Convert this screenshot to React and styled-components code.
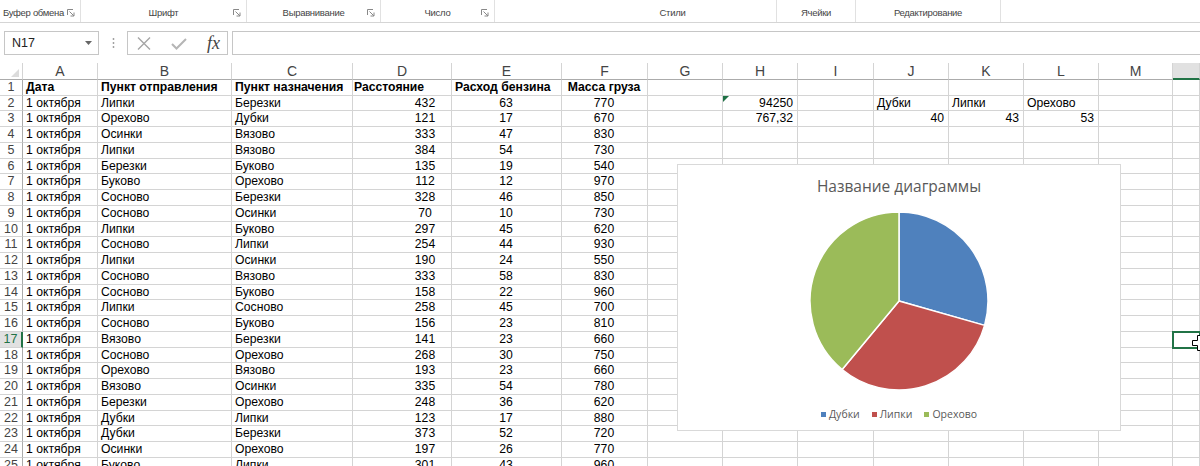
import React from "react";
import styled, { createGlobalStyle } from "styled-components";

const GlobalStyle = createGlobalStyle`
  html, body {
    margin: 0;
    padding: 0;
    background: #fff;
    overflow: hidden;
  }
  body {
    font-family: "Liberation Sans", Arial, sans-serif;
  }
`;

const Page = styled.div`
  position: relative;
  width: 1200px;
  height: 466px;
  overflow: hidden;
  background: #fff;
`;

/* ribbon */
const Ribbon = styled.div`
  display: flex;
  height: 22px;
  border-bottom: 1px solid #d5d5d5;
`;

const Group = styled.div`
  position: relative;
  box-sizing: border-box;
  width: ${(p) => p.$w}px;
  flex: ${(p) => (p.$grow ? 1 : "none")};
  display: flex;
  align-items: flex-end;
  justify-content: ${(p) => (p.$left ? "flex-start" : "center")};
  padding: 0 0 3px ${(p) => p.$shift || 0}px;
  border-right: ${(p) => (p.$grow ? "none" : "1px solid #e1e1e1")};
  font-family: "Liberation Sans", Arial, sans-serif;
  font-size: 9.5px;
  letter-spacing: -0.3px;
  line-height: 13px;
  color: #444;
  white-space: nowrap;
`;

const Launcher = styled.svg`
  position: absolute;
  right: 5px;
  bottom: 5px;
`;

/* formula bar */
const FormulaRow = styled.div`
  display: flex;
  align-items: center;
  height: 40px;
  padding-left: 4px;
`;

const NameBox = styled.div`
  box-sizing: border-box;
  width: 95px;
  height: 24px;
  border: 1px solid #c6c6c6;
  display: flex;
  align-items: center;
  justify-content: space-between;
  padding: 0 6px 0 7px;
  font-size: 12.5px;
  color: #222;
`;

const Grip = styled.div`
  width: 28px;
  display: flex;
  justify-content: center;
`;

const FxBox = styled.div`
  box-sizing: border-box;
  width: 101px;
  height: 24px;
  border: 1px solid #c6c6c6;
  display: flex;
  align-items: center;
  gap: 20px;
  padding-left: 9px;
`;

const Fx = styled.span`
  font-family: "Liberation Serif", "DejaVu Serif", serif;
  font-style: italic;
  font-size: 18px;
  color: #444;
  width: 16px;
  line-height: 18px;
`;

const FormulaInput = styled.div`
  box-sizing: border-box;
  flex: 1;
  height: 24px;
  margin-left: 4px;
  border: 1px solid #c6c6c6;
  border-right: none;
`;

/* sheet */
const Sheet = styled.div`
  display: grid;
  grid-template-columns: 23px 75px 134px 121px 99px 110px 86px 75px 75px 76px 75px 75px 75px 74px 1fr;
  grid-template-rows: 16.75px;
  grid-auto-rows: 15.75px;
`;

const ColHead = styled.div`
  position: relative;
  box-sizing: border-box;
  border-right: 1px solid #d4d4d4;
  border-bottom: ${(p) => (p.$active ? "2px solid #217346" : "1px solid #ababab")};
  background: ${(p) => (p.$active ? "#e1e1e1" : "#fff")};
  color: ${(p) => (p.$active ? "#217346" : "#444")};
  text-align: center;
  font-size: 14px;
  line-height: 16px;
  overflow: hidden;
`;

const Corner = styled.svg`
  position: absolute;
  right: 3px;
  bottom: 2px;
`;

const RowHead = styled.div`
  box-sizing: border-box;
  border-right: ${(p) => (p.$active ? "2px solid #217346" : "1px solid #ababab")};
  border-bottom: 1px solid #d4d4d4;
  background: ${(p) => (p.$active ? "#e1e1e1" : "#fff")};
  color: ${(p) => (p.$active ? "#217346" : "#444")};
  text-align: center;
  font-size: 12.5px;
  line-height: 14.75px;
`;

const Cell = styled.div`
  position: relative;
  box-sizing: border-box;
  border-right: 1px solid #d4d4d4;
  border-bottom: 1px solid #d4d4d4;
  padding: 0 4px 0 ${(p) => p.$indent || 3}px;
  font-size: 12.2px;
  line-height: 14.75px;
  white-space: nowrap;
  overflow: ${(p) => (p.$selected ? "visible" : "hidden")};
  color: #000;
  text-align: ${(p) => p.$align || "left"};
  font-weight: ${(p) => (p.$bold ? 700 : 400)};
  ${(p) =>
    p.$selected &&
    `outline: 2px solid #217346; outline-offset: -1px; z-index: 2;`}
`;

const ErrorMark = styled.svg`
  position: absolute;
  left: 0;
  top: 0;
`;

const Cursor = styled.svg`
  position: absolute;
  left: 18px;
  top: 2px;
`;

/* chart */
const Chart = styled.div`
  position: absolute;
  left: 677px;
  top: 164px;
  width: 444px;
  height: 267px;
  box-sizing: border-box;
  border: 1px solid #d9d9d9;
  background: #fff;
  display: flex;
  flex-direction: column;
  align-items: center;
  z-index: 3;
`;

const ChartTitle = styled.div`
  margin-top: 11px;
  font-family: "Open Sans", "Noto Sans", sans-serif;
  font-size: 15.5px;
  line-height: 20px;
  color: #595959;
`;

const Pie = styled.svg`
  margin-top: 14px;
  display: block;
`;

const Legend = styled.div`
  margin-top: 15px;
  display: flex;
  gap: 12px;
  font-family: "Open Sans", "Noto Sans", sans-serif;
  font-size: 10.5px;
  line-height: 14px;
  color: #595959;
`;

const LegendItem = styled.div`
  display: flex;
  align-items: center;
  gap: 3px;
`;

const Swatch = styled.span`
  width: 5px;
  height: 5px;
  background: ${(p) => p.$color};
`;

const groups = [
  { w: 81, label: "Буфер обмена", left: true, shift: 3, launcher: true },
  { w: 166, label: "Шрифт", launcher: true },
  { w: 134, label: "Выравнивание", launcher: true },
  { w: 114, label: "Число", launcher: true },
  { w: 282, label: "Стили", shift: 74 },
  { w: 79, label: "Ячейки" },
  { w: 145, label: "Редактирование" },
  { grow: true, label: "" },
];

const letters = ["A", "B", "C", "D", "E", "F", "G", "H", "I", "J", "K", "L", "M", "N"];

const trips = [
  ["Липки", "Березки", 432, 63, 770],
  ["Орехово", "Дубки", 121, 17, 670],
  ["Осинки", "Вязово", 333, 47, 830],
  ["Липки", "Вязово", 384, 54, 730],
  ["Березки", "Буково", 135, 19, 540],
  ["Буково", "Орехово", 112, 12, 970],
  ["Сосново", "Березки", 328, 46, 850],
  ["Сосново", "Осинки", 70, 10, 730],
  ["Липки", "Буково", 297, 45, 620],
  ["Сосново", "Липки", 254, 44, 930],
  ["Липки", "Осинки", 190, 24, 550],
  ["Сосново", "Вязово", 333, 58, 830],
  ["Сосново", "Буково", 158, 22, 960],
  ["Липки", "Сосново", 258, 45, 700],
  ["Сосново", "Буково", 156, 23, 810],
  ["Вязово", "Березки", 141, 23, 660],
  ["Сосново", "Орехово", 268, 30, 750],
  ["Орехово", "Вязово", 193, 23, 660],
  ["Вязово", "Осинки", 335, 54, 780],
  ["Березки", "Орехово", 248, 36, 620],
  ["Дубки", "Липки", 123, 17, 880],
  ["Дубки", "Березки", 373, 52, 720],
  ["Осинки", "Орехово", 197, 26, 770],
  ["Буково", "Липки", 301, 43, 960],
];

const slices = [
  { name: "Дубки", value: 40, color: "#4f81bd" },
  { name: "Липки", value: 43, color: "#c0504d" },
  { name: "Орехово", value: 53, color: "#9bbb59" },
];

const SELECTED_ROW = 17;

function buildRow(r) {
  const cells = Array(14).fill(null);
  if (r === 1) {
    const heads = ["Дата", "Пункт отправления", "Пункт назначения", "Расстояние", "Расход бензина", "Масса груза"];
    heads.forEach((h, i) => {
      cells[i] = { v: h, bold: true, align: i === 5 ? "center" : "left", indent: i === 3 ? 1 : undefined };
    });
    return cells;
  }
  const t = trips[r - 2];
  cells[0] = { v: "1 октября" };
  cells[1] = { v: t[0] };
  cells[2] = { v: t[1] };
  cells[3] = { v: t[2], align: "center", indent: 50 };
  cells[4] = { v: t[3], align: "center" };
  cells[5] = { v: t[4], align: "center" };
  if (r === 2) {
    cells[7] = { v: "94250", align: "right", mark: true };
    slices.forEach((s, i) => (cells[9 + i] = { v: s.name }));
  }
  if (r === 3) {
    cells[7] = { v: "767,32", align: "right" };
    slices.forEach((s, i) => (cells[9 + i] = { v: s.value, align: "right" }));
  }
  return cells;
}

function slicePath(cx, cy, r, a0, a1) {
  const pt = (a) => {
    const rad = (a * Math.PI) / 180;
    return [cx + r * Math.sin(rad), cy - r * Math.cos(rad)];
  };
  const [x0, y0] = pt(a0);
  const [x1, y1] = pt(a1);
  const large = a1 - a0 > 180 ? 1 : 0;
  return `M${cx} ${cy} L${x0} ${y0} A${r} ${r} 0 ${large} 1 ${x1} ${y1} Z`;
}

const LauncherIcon = () => (
  <Launcher width="8" height="8" viewBox="0 0 8 8">
    <path d="M0.5 6 V0.5 H6" fill="none" stroke="#888" strokeWidth="1" />
    <path d="M2.5 2.5 L7 7 M7 3.5 V7 H3.5" fill="none" stroke="#888" strokeWidth="1" />
  </Launcher>
);

const PieChart = () => {
  const total = slices.reduce((a, s) => a + s.value, 0);
  let start = 0;
  return (
    <Pie width="182" height="182" viewBox="0 0 182 182">
      {slices.map((s) => {
        const end = start + (s.value / total) * 360;
        const d = slicePath(91, 91, 89, start, end);
        start = end;
        return <path key={s.name} d={d} fill={s.color} stroke="#fff" strokeWidth="1.5" strokeLinejoin="round" />;
      })}
    </Pie>
  );
};

export default function App() {
  const rows = Array.from({ length: 25 }, (_, i) => i + 1);
  return (
    <Page>
      <GlobalStyle />
      <Ribbon>
        {groups.map((g, i) => (
          <Group key={i} $w={g.w} $grow={g.grow} $left={g.left} $shift={g.shift}>
            {g.label}
            {g.launcher && <LauncherIcon />}
          </Group>
        ))}
      </Ribbon>

      <FormulaRow>
        <NameBox>
          N17
          <svg width="7" height="4" viewBox="0 0 7 4">
            <path d="M0 0 H7 L3.5 4 Z" fill="#666" />
          </svg>
        </NameBox>
        <Grip>
          <svg width="3" height="12" viewBox="0 0 3 12">
            <circle cx="1.5" cy="2" r="0.9" fill="#999" />
            <circle cx="1.5" cy="6" r="0.9" fill="#999" />
            <circle cx="1.5" cy="10" r="0.9" fill="#999" />
          </svg>
        </Grip>
        <FxBox>
          <svg width="14" height="13" viewBox="0 0 14 13">
            <path d="M1 0.5 L13 12.5 M13 0.5 L1 12.5" stroke="#a6a6a6" strokeWidth="1.4" fill="none" />
          </svg>
          <svg width="16" height="13" viewBox="0 0 16 13">
            <path d="M1 7 L5.5 11.5 L15 2" stroke="#b5b5b5" strokeWidth="2" fill="none" />
          </svg>
          <Fx>fx</Fx>
        </FxBox>
        <FormulaInput />
      </FormulaRow>

      <Sheet>
        <ColHead>
          <Corner width="8" height="8" viewBox="0 0 8 8">
            <path d="M8 0 V8 H0 Z" fill="#dcdcdc" />
          </Corner>
        </ColHead>
        {letters.map((l) => (
          <ColHead key={l} $active={l === "N"}>
            {l === "N" ? "" : l}
          </ColHead>
        ))}

        {rows.map((r) => (
          <React.Fragment key={r}>
            <RowHead $active={r === SELECTED_ROW}>{r}</RowHead>
            {buildRow(r).map((c, i) => {
              const selected = r === SELECTED_ROW && i === 13;
              return (
                <Cell
                  key={i}
                  $align={c && c.align}
                  $bold={c && c.bold}
                  $indent={c && c.indent}
                  $selected={selected}
                >
                  {c && c.mark && (
                    <ErrorMark width="6" height="6" viewBox="0 0 6 6">
                      <path d="M0 0 H6 L0 6 Z" fill="#1e7145" />
                    </ErrorMark>
                  )}
                  {c ? c.v : ""}
                  {selected && (
                    <Cursor width="18" height="18" viewBox="0 0 18 18">
                      <path
                        d="M6.5 1.5 H11.5 V6.5 H16.5 V11.5 H11.5 V16.5 H6.5 V11.5 H1.5 V6.5 H6.5 Z"
                        fill="#fff"
                        stroke="#000"
                        strokeWidth="1"
                      />
                    </Cursor>
                  )}
                </Cell>
              );
            })}
          </React.Fragment>
        ))}
      </Sheet>

      <Chart>
        <ChartTitle>Название диаграммы</ChartTitle>
        <PieChart />
        <Legend>
          {slices.map((s) => (
            <LegendItem key={s.name}>
              <Swatch $color={s.color} />
              {s.name}
            </LegendItem>
          ))}
        </Legend>
      </Chart>
    </Page>
  );
}
